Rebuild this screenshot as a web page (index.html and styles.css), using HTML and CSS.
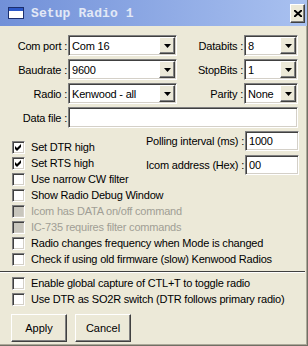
FILE: index.html
```html
<!DOCTYPE html>
<html lang="en">
<head>
    <meta charset="UTF-8">
    <title>Setup Radio 1</title>
    <link rel="stylesheet" href="styles.css">
</head>
<body>
    <div class="window">
        <div class="titlebar">
            <svg class="app-icon" width="16" height="12" viewBox="0 0 16 12">
                <rect x="0.5" y="0.5" width="15" height="11" fill="#fff" stroke="#1c2f6e"/>
                <rect x="1" y="1" width="14" height="3" fill="#2c58c8"/>
            </svg>
            <span class="title">Setup Radio 1</span>
            <div class="close-btn">
                <svg width="8" height="7" viewBox="0 0 8 7">
                    <path d="M0 0 L8 7 M8 0 L0 7" stroke="#000" stroke-width="2"/>
                </svg>
            </div>
        </div>

        <div class="content">
            <!-- Port settings -->
            <div class="port-grid">
                <label>Com port :</label>
                <div class="combo"><span>Com 16</span><span class="drop"><svg width="7" height="4"><polygon points="0,0 7,0 3.5,4" fill="#000"/></svg></span></div>
                <label>Databits :</label>
                <div class="combo"><span>8</span><span class="drop"><svg width="7" height="4"><polygon points="0,0 7,0 3.5,4" fill="#000"/></svg></span></div>

                <label>Baudrate :</label>
                <div class="combo"><span>9600</span><span class="drop"><svg width="7" height="4"><polygon points="0,0 7,0 3.5,4" fill="#000"/></svg></span></div>
                <label>StopBits :</label>
                <div class="combo"><span>1</span><span class="drop"><svg width="7" height="4"><polygon points="0,0 7,0 3.5,4" fill="#000"/></svg></span></div>

                <label>Radio :</label>
                <div class="combo"><span>Kenwood - all</span><span class="drop"><svg width="7" height="4"><polygon points="0,0 7,0 3.5,4" fill="#000"/></svg></span></div>
                <label>Parity :</label>
                <div class="combo"><span>None</span><span class="drop"><svg width="7" height="4"><polygon points="0,0 7,0 3.5,4" fill="#000"/></svg></span></div>

                <label>Data file :</label>
                <div class="field data-file"></div>
            </div>

            <!-- Options -->
            <div class="options-top">
                <div class="checks">
                    <div class="check-row"><span class="box"><svg width="11" height="11"><polygon points="2,4 4,6 8,2 8,5 4,9 2,7" fill="#000"/></svg></span>Set DTR high</div>
                    <div class="check-row"><span class="box"><svg width="11" height="11"><polygon points="2,4 4,6 8,2 8,5 4,9 2,7" fill="#000"/></svg></span>Set RTS high</div>
                </div>
                <div class="fields">
                    <label>Polling interval (ms) :</label>
                    <div class="field"><span>1000</span></div>
                    <label>Icom address (Hex) :</label>
                    <div class="field"><span>00</span></div>
                </div>
            </div>
            <div class="checks">
                <div class="check-row"><span class="box"></span>Use narrow CW filter</div>
                <div class="check-row"><span class="box"></span>Show Radio Debug Window</div>
                <div class="check-row disabled"><span class="box"></span>Icom has DATA on/off command</div>
                <div class="check-row disabled"><span class="box"></span>IC-735 requires filter commands</div>
                <div class="check-row"><span class="box"></span>Radio changes frequency when Mode is changed</div>
                <div class="check-row"><span class="box"></span>Check if using old firmware (slow) Kenwood Radios</div>
            </div>

            <div class="separator"></div>

            <div class="checks global">
                <div class="check-row"><span class="box"></span>Enable global capture of CTL+T to toggle radio</div>
                <div class="check-row"><span class="box"></span>Use DTR as SO2R switch (DTR follows primary radio)</div>
            </div>

            <div class="buttons">
                <button>Apply</button>
                <button>Cancel</button>
            </div>
        </div>
    </div>
</body>
</html>
```

FILE: styles.css
```css
/* Global */
body {
    margin: 0;
    font-family: "Liberation Sans", Arial, sans-serif;
    font-size: 11px;
    letter-spacing: -0.2px;
    color: #000;
}

.window {
    width: 308px;
    height: 346px;
    box-sizing: border-box;
    background: #ece9d8;
    border-right: 1px solid #716f64;
    border-bottom: 1px solid #716f64;
    box-shadow: inset -1px -1px #aca899;
    overflow: hidden;
}

/* Title bar */
.titlebar {
    height: 26px;
    display: flex;
    align-items: center;
    padding-left: 8px;
    background: linear-gradient(to right, #7190d8, #a9c1f0);
}

.app-icon {
    display: block;
}

.title {
    margin-left: 7px;
    font-family: "Liberation Mono", "Courier New", monospace;
    font-weight: bold;
    font-size: 13px;
    letter-spacing: 0.1px;
    color: #e2e8f6;
    flex: 1;
}

.close-btn {
    width: 13px;
    height: 17px;
    margin-right: 2px;
    display: flex;
    align-items: center;
    justify-content: center;
    background: #ece9d8;
    border: 1px solid;
    border-color: #fff #404040 #404040 #fff;
    box-shadow: inset -1px -1px #808080;
}

/* Content */
.content {
    padding-top: 9px;
}

label {
    white-space: nowrap;
    text-align: right;
    padding-right: 1px;
    align-self: center;
}

.port-grid {
    display: grid;
    grid-template-columns: 68px 109px 67px 54px;
    grid-auto-rows: 21px;
    row-gap: 3px;
}

/* Sunken input fields */
.field,
.combo {
    box-sizing: border-box;
    background: #fff;
    border: 1px solid;
    border-color: #808080 #fff #fff #808080;
    box-shadow: inset 1px 1px #404040, inset -1px -1px #d4d0c8;
    display: flex;
    align-items: center;
    padding: 2px 2px 2px 3px;
    white-space: nowrap;
}

.combo span:first-child {
    flex: 1;
}

.data-file {
    grid-column: 2 / 5;
}

.drop {
    width: 16px;
    height: 17px;
    box-sizing: border-box;
    background: #ece9d8;
    border: 1px solid;
    border-color: #fff #404040 #404040 #fff;
    box-shadow: inset -1px -1px #808080;
    display: flex;
    align-items: center;
    justify-content: center;
    margin-right: -1px;
}

.drop svg {
    display: block;
}

/* Options */
.options-top {
    display: flex;
    justify-content: space-between;
    height: 32px;
    margin-top: 11px;
    padding-right: 8px;
}

.fields {
    display: grid;
    grid-template-columns: auto 54px;
    grid-auto-rows: 20px;
    row-gap: 4px;
    margin-top: -8px;
    height: 44px;
}

.check-row {
    height: 16px;
    display: flex;
    align-items: center;
    padding-left: 12px;
    white-space: nowrap;
}

.box {
    width: 13px;
    height: 13px;
    box-sizing: border-box;
    margin-right: 6px;
    background: #fff;
    border: 1px solid;
    border-color: #808080 #fff #fff #808080;
    box-shadow: inset 1px 1px #404040, inset -1px -1px #d4d0c8;
}

.box svg {
    display: block;
}

.check-row.disabled {
    color: #a09e95;
}

.check-row.disabled .box {
    background: #c8c6bd;
}

.separator {
    margin: 4px 2px 0 0;
    border-top: 1px solid #404040;
    border-bottom: 1px solid #fff;
}

.global {
    margin-top: 2px;
}

/* Buttons */
.buttons {
    display: flex;
    gap: 8px;
    padding-left: 11px;
    margin-top: 7px;
}

.buttons button {
    width: 56px;
    height: 28px;
    font-family: "Liberation Sans", Arial, sans-serif;
    font-size: 11px;
    color: #000;
    background: #ece9d8;
    border: 1px solid;
    border-color: #fff #404040 #404040 #fff;
    box-shadow: inset -1px -1px #808080;
    padding: 0;
}
```
